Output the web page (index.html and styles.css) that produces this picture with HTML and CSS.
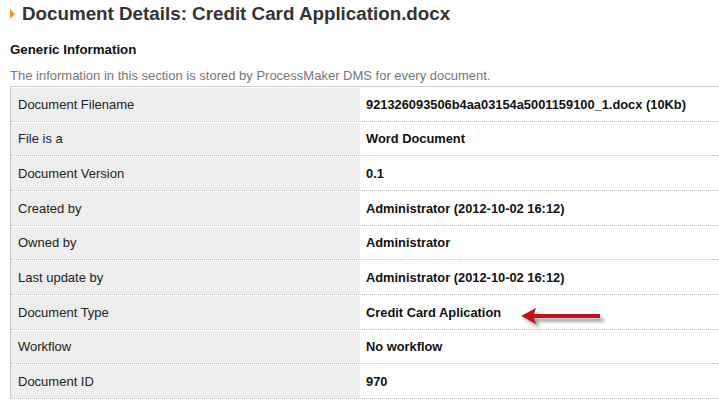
FILE: index.html
```html
<!DOCTYPE html>
<html>
<head>
<meta charset="utf-8">
<link rel="stylesheet" href="styles.css">
</head>
<body>
<div class="page">
  <h1 class="title"><span class="bullet"></span>Document Details: Credit Card Application.docx</h1>
  <h2 class="section">Generic Information</h2>
  <p class="desc">The information in this section is stored by ProcessMaker DMS for every document.</p>
  <div class="table">
    <div class="row"><div class="label">Document Filename</div><div class="value">921326093506b4aa03154a5001159100_1.docx (10Kb)</div></div>
    <div class="row"><div class="label">File is a</div><div class="value">Word Document</div></div>
    <div class="row"><div class="label">Document Version</div><div class="value">0.1</div></div>
    <div class="row"><div class="label">Created by</div><div class="value">Administrator (2012-10-02 16:12)</div></div>
    <div class="row"><div class="label">Owned by</div><div class="value">Administrator</div></div>
    <div class="row"><div class="label">Last update by</div><div class="value">Administrator (2012-10-02 16:12)</div></div>
    <div class="row"><div class="label">Document Type</div><div class="value">Credit Card Aplication</div></div>
    <div class="row"><div class="label">Workflow</div><div class="value">No workflow</div></div>
    <div class="row"><div class="label">Document ID</div><div class="value">970</div></div>
  </div>
  <svg class="arrow" width="100" height="30" viewBox="0 0 100 30">
    <defs>
      <filter id="sh" x="-20%" y="-50%" width="140%" height="200%">
        <feGaussianBlur stdDeviation="1.8"/>
      </filter>
    </defs>
    <g fill="#666" opacity="0.55" filter="url(#sh)" transform="translate(4,4)">
      <polygon points="3,10 18,2 16,8 82,8 82,12 16,12 18,18"/>
    </g>
    <polygon fill="#c0141b" points="3,10 18,2 16,8 82,8 82,12 16,12 18,18"/>
  </svg>
</div>
</body>
</html>
```
FILE: styles.css
```css
html, body {
  margin: 0;
  padding: 0;
  background: #fff;
}
.page {
  position: relative;
  padding: 0 0 0 10px;
  font-family: "Liberation Sans", Arial, sans-serif;
  overflow: hidden;
  width: 709px;
  height: 409px;
}
.title {
  margin: 0;
  height: 28px;
  display: flex;
  align-items: center;
  font-size: 18.8px;
  font-weight: bold;
  color: #333;
}
.bullet {
  display: inline-block;
  width: 0;
  height: 0;
  border-top: 5px solid transparent;
  border-bottom: 5px solid transparent;
  border-left: 5px solid #f7941d;
  margin-right: 7px;
}
.section {
  margin: 14px 0 0 0;
  font-size: 13.3px;
  font-weight: bold;
  color: #111;
  line-height: 16px;
}
.desc {
  margin: 10px 0 0 0;
  font-size: 13px;
  color: #777;
  line-height: 15px;
}
.table {
  margin-top: 3px;
  width: 760px;
  border-top: 1px solid #ccc;
  border-left: 1px solid #ccc;
}
.row {
  display: flex;
  height: 34.67px;
  box-sizing: border-box;
  border-bottom: 1px dotted #bbb;
  font-size: 13px;
  padding-top: 1px;
}
.label {
  width: 349px;
  background: #eee;
  padding-left: 7px;
  box-sizing: border-box;
  display: flex;
  align-items: center;
  color: #222;
}
.value {
  flex: 1;
  padding-left: 6px;
  display: flex;
  align-items: center;
  font-weight: bold;
  font-size: 12.85px;
  color: #111;
}
.arrow {
  position: absolute;
  left: 518px;
  top: 306px;
}
```
